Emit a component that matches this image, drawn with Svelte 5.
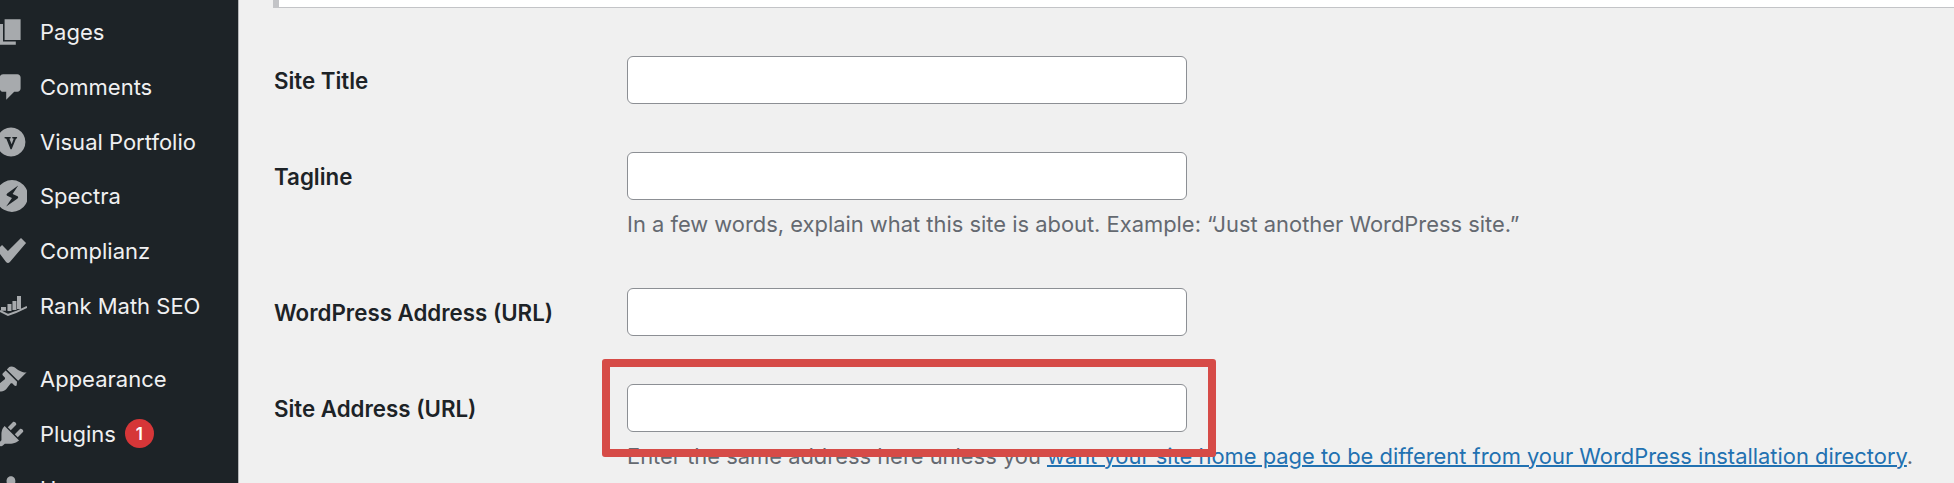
<script lang="ts">
	const menu = [
		{ id: 'pages', label: 'Pages' },
		{ id: 'comments', label: 'Comments' },
		{ id: 'portfolio', label: 'Visual Portfolio' },
		{ id: 'spectra', label: 'Spectra' },
		{ id: 'complianz', label: 'Complianz' },
		{ id: 'rankmath', label: 'Rank Math SEO', last: true },
		{ id: 'appearance', label: 'Appearance' },
		{ id: 'plugins', label: 'Plugins', badge: 1 },
		{ id: 'users', label: 'Users' }
	];
</script>

<div class="page">
	<nav class="sidebar">
		{#each menu as item}
			<a class="item" class:last={item.last} href="#{item.id}">
				<svg class="icon" viewBox="0 0 20 20" aria-hidden="true">
					{#if item.id === 'pages'}
						<path d="M6 15V2h10v13H6zm-1 1h8v2H3V5h2v11z" />
					{:else if item.id === 'comments'}
						<path d="M5 2h9c1.100 0 2 .9 2 2v7c0 1.100-.9 2-2 2h-2l-5 5v-5H5c-1.100 0-2-.9-2-2V4c0-1.100.9-2 2-2z" />
					{:else if item.id === 'portfolio'}
						<path fill-rule="evenodd" d="M10 1a9 9 0 1 0 .01 0zM6 6.800h3.800v.9l-.8.2 1.400 3.500 1.300-3.500-.9-.2v-.9h3v.9l-.7.2-2.700 6.600H9.700L7.100 7.900l-1.100-.2z" />
					{:else if item.id === 'spectra'}
						<path fill-rule="evenodd" d="M10.600 0a10 10 0 1 0 .01 0zM14.500 3.500 7.800 8.300q-1.100.8-.2 1.600l3 1.300-3.600 5.300 6.900-4.800q1.100-.8.2-1.600l-3.100-1.300z" />
					{:else if item.id === 'complianz'}
						<path d="M1.250 9.400 4.400 6.250 8.100 10 16.250 1.900 19.400 5 9.300 16.900q-1.200 1.200-2.400 0z" />
					{:else if item.id === 'rankmath'}
						<path d="M3.750 10.600h3.100V13H3.750zM7.800 8.750h2.500v4.300H7.800zM10.900 6.900h2.500v5.600h-2.500zM13.750 3.750h2.500v8.150h-2.500z" />
						<path class="wave" d="M3.100 13.100 8.100 15.600 13.100 13.750 20 10.600" />
					{:else if item.id === 'appearance'}
						<path d="M14.480 11.060 7.410 3.990l1.500-1.500c.5-.56 2.300-.47 3.510.32 1.210.8 1.430 1.280 2.910 2.100 1.180.64 2.450 1.260 4.450.85zm-.71.71L6.700 4.700 4.930 6.470c-.39.39-.39 1.020 0 1.410l1.060 1.060c.39.39.39 1.030 0 1.420-.6.6-1.430 1.110-2.210 1.690-.35.26-.7.53-1.010.84C1.430 13.230.7 14.800 1.650 17.350c2.550.95 4.120.22 5.460-1.120.31-.31.58-.66.84-1.010.58-.78 1.090-1.610 1.690-2.210.39-.39 1.030-.39 1.420 0l1.060 1.060c.39.39 1.020.39 1.410 0z" />
					{:else if item.id === 'plugins'}
						<path d="M13.110 4.360 9.870 7.600 8 5.730l3.240-3.240c.35-.34 1.050-.2 1.560.32.52.51.66 1.210.31 1.550zm-8 1.770.91-1.120 9.010 9.010-1.190.84c-.71.71-2.630 1.160-3.820 1.160H6.140L4.900 17.260c-.59.59-1.540.59-2.120 0-.59-.58-.59-1.530 0-2.120l1.240-1.240v-3.880c0-1.130.4-3.050 1.090-3.890zm7.260 3.970 3.240-3.240c.34-.35 1.040-.21 1.550.31.52.51.66 1.210.31 1.550l-3.240 3.250z" />
					{:else}
						<path d="M10 9.250c-2.270 0-2.730-3.440-2.730-3.440C7 4.020 7.820 2 9.970 2c2.160 0 2.980 2.020 2.710 3.810 0 0-.41 3.440-2.680 3.440zm0 2.570L12.720 10c2.390 0 4.520 2.330 4.520 4.530v2.490s-3.650 1.130-7.240 1.130c-3.650 0-7.240-1.130-7.240-1.130v-2.490c0-2.250 1.940-4.480 4.150-4.480z" />
					{/if}
				</svg>
				<span class="label">{item.label}</span>
				{#if item.badge}
					<span class="badge">{item.badge}</span>
				{/if}
			</a>
		{/each}
	</nav>

	<main class="content">
		<div class="notice"></div>

		<form class="form">
			<div class="row">
				<label for="title">Site Title</label>
				<div><input id="title" type="text" /></div>
			</div>
			<div class="row">
				<label for="tagline">Tagline</label>
				<div>
					<input id="tagline" type="text" />
					<p class="desc">In a few words, explain what this site is about. Example: “Just another WordPress site.”</p>
				</div>
			</div>
			<div class="row">
				<label for="wpurl">WordPress Address (URL)</label>
				<div><input id="wpurl" type="text" /></div>
			</div>
			<div class="row">
				<label for="siteurl">Site Address (URL)</label>
				<div>
					<input id="siteurl" type="text" />
					<p class="desc">Enter the same address here unless you <a href="#codex">want your site home page to be different from your WordPress installation directory</a>.</p>
				</div>
			</div>
		</form>

		<div class="highlight"></div>
	</main>
</div>

<style>
	:global(body) {
		margin: 0;
		font-family: Inter, 'Liberation Sans', sans-serif;
		background: #f0f0f0;
	}

	.page {
		display: flex;
		height: 483px;
		overflow: hidden;
		background: #f0f0f0;
	}

	.sidebar {
		flex: none;
		width: 238px;
		border-right: 1px solid #b4b6b8;
		background: #1d2327;
		padding-top: 4.600px;
	}

	.item {
		display: flex;
		align-items: center;
		height: 54.800px;
		color: #f0f0f1;
		text-decoration: none;
		font-size: 22px;
	}

	.item.last {
		margin-bottom: 18.200px;
	}

	.icon {
		flex: none;
		width: 32px;
		height: 32px;
		margin-left: -5px;
		margin-right: 13px;
		fill: #a7aaad;
	}

	.wave {
		fill: none;
		stroke: #a7aaad;
		stroke-width: 1.200;
	}

	.badge {
		display: flex;
		align-items: center;
		justify-content: center;
		width: 29px;
		height: 29px;
		margin-left: 9px;
		border-radius: 50%;
		background: #d63638;
		color: #fff;
		font-size: 17px;
		font-weight: 600;
	}

	.content {
		position: relative;
		flex: 1;
		min-width: 0;
		padding-left: 34px;
	}

	.notice {
		height: 7px;
		border-left: 6px solid #c3c4c7;
		border-bottom: 1px solid #c3c4c7;
		background: #fff;
	}

	.form {
		display: flex;
		flex-direction: column;
		gap: 48px;
		margin-top: 48px;
	}

	.row {
		display: grid;
		grid-template-columns: 354px 1fr;
	}

	label {
		height: 48px;
		margin-left: 1px;
		line-height: 50px;
		color: #1d2327;
		font-size: 22.300px;
		font-weight: 600;
	}

	input {
		display: block;
		box-sizing: border-box;
		width: 560px;
		height: 48px;
		padding: 0 12px;
		border: 1.500px solid #8c8f94;
		border-radius: 6px;
		background: #fff;
	}

	.desc {
		margin: 9px 0 1px;
		color: #646970;
		font-size: 21.900px;
		line-height: 30px;
		white-space: nowrap;
	}

	.desc a {
		color: #2271b1;
		text-decoration-thickness: 2px;
	}

	.highlight {
		position: absolute;
		left: 363px;
		top: 359px;
		box-sizing: border-box;
		width: 614px;
		height: 98px;
		border: 8px solid #d64b47;
		border-radius: 3px;
	}
</style>
